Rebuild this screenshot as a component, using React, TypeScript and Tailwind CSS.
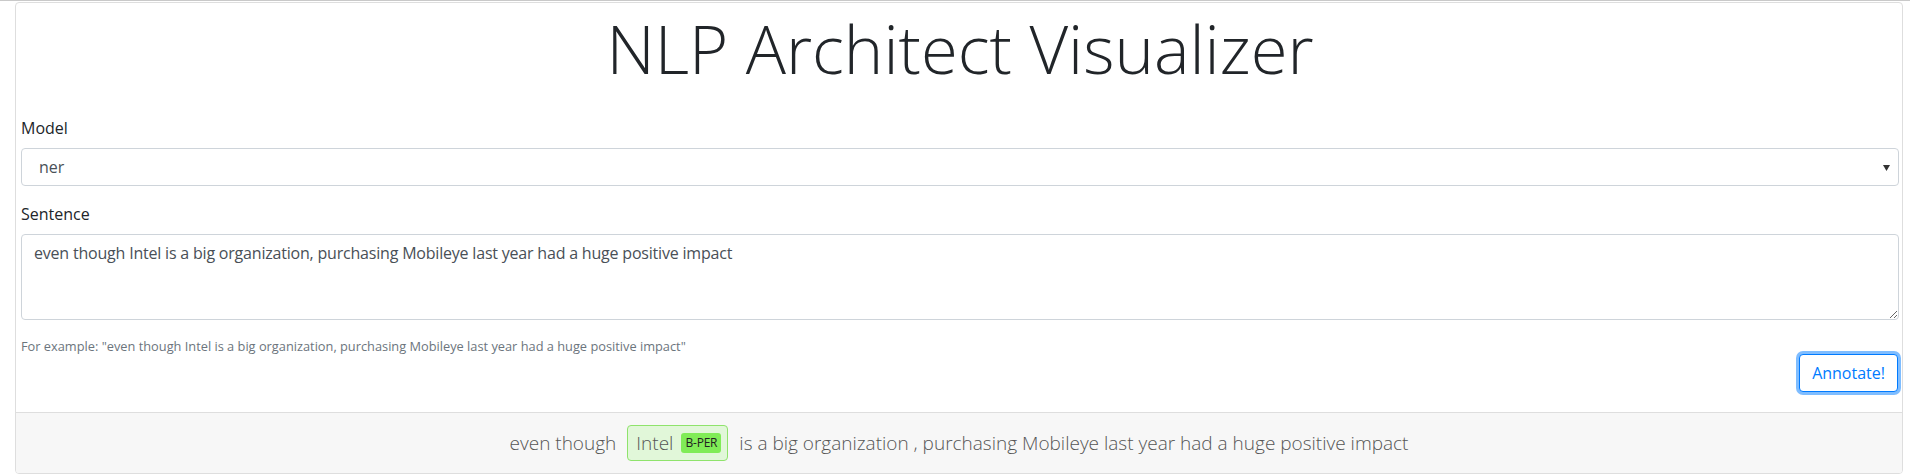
import React from 'react';

const SENTENCE =
  'even though Intel is a big organization, purchasing Mobileye last year had a huge positive impact';

function Entity({ text, tag }: { text: string; tag: string }) {
  return (
    <span className="mx-[11px] inline-flex h-[36px] items-center gap-[8px] rounded-[4px] border border-[#8fe36c] bg-[#e1f7d9] pl-[8px] pr-[6px]">
      <span>{text}</span>
      <span className="flex h-[20px] items-center rounded-[3px] bg-[#80ec57] px-[4px] text-[12px] font-normal leading-none tracking-[-0.2px] text-[#222]">
        {tag}
      </span>
    </span>
  );
}

export default function App() {
  return (
    <div
      className="min-h-[476px] border-t border-[#c9c9c9] bg-white text-[#212529]"
      style={{ fontFamily: '"Open Sans", "Noto Sans", sans-serif' }}
    >
      <div className="ml-[15px] mr-[7px] mt-[1px] overflow-hidden rounded-[4px] border border-[#dedede]">
        <div className="pb-[20px] pl-[5px] pr-[3px] pt-[2px]">
          <h1 className="mb-[25px] text-center text-[67px] font-light leading-[86px] text-[#212529]">
            NLP Architect Visualizer
          </h1>

          <label className="mb-[8px] block text-[16px] leading-[24px]">Model</label>
          <div className="flex h-[38px] items-center justify-between rounded-[4px] border border-[#ced4da] pl-[17px] pr-[8px] text-[16px] text-[#495057]">
            <span>ner</span>
            <svg width="7" height="6" viewBox="0 0 7 6" className="mt-[1px]">
              <path d="M0 0 H7 L3.5 6 Z" fill="#333" />
            </svg>
          </div>

          <label className="mb-[8px] mt-[16px] block text-[16px] leading-[24px]">Sentence</label>
          <textarea
            rows={3}
            defaultValue={SENTENCE}
            className="block h-[86px] w-full rounded-[4px] border border-[#ced4da] px-[12px] py-[6px] text-[16px] leading-[24px] tracking-[-0.2px] text-[#495057] outline-none"
            style={{ fontFamily: '"Open Sans", "Noto Sans", sans-serif' }}
          />

          <small className="mt-[16px] block h-[18px] text-[12.8px] leading-[20px] text-[#6c757d]">
            For example: "{SENTENCE}"
          </small>

          <div className="flex justify-end pr-[1px]">
            <button className="h-[38px] rounded-[4px] border border-[#007bff] bg-white px-[12px] text-[16px] text-[#007bff] shadow-[0_0_0_3px_rgba(0,123,255,0.5)]">
              Annotate!
            </button>
          </div>
        </div>

        <div className="flex h-[61px] items-center justify-center border-t border-[#dedede] bg-[#f7f7f7] text-[19px] font-light text-[#555]">
          <span>even though</span>
          <Entity text="Intel" tag="B-PER" />
          <span>is a big organization , purchasing Mobileye last year had a huge positive impact</span>
        </div>
      </div>
    </div>
  );
}
